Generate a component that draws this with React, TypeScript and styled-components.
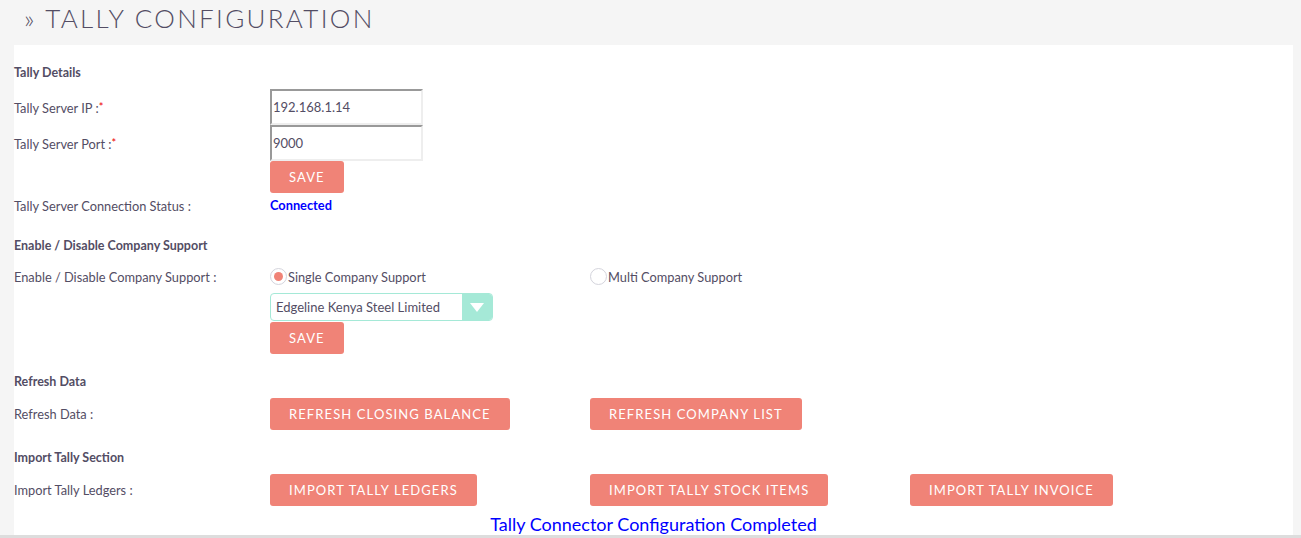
import React from 'react';
import styled, { createGlobalStyle } from 'styled-components';

const GlobalStyle = createGlobalStyle`
  html, body {
    margin: 0;
    padding: 0;
    background: #f5f5f5;
  }
  body {
    font-family: Lato, "Open Sans", sans-serif;
    color: #534d64;
  }
`;

const Page = styled.div`
  width: 1301px;
  height: 538px;
  overflow: hidden;
  background: #f5f5f5;
`;

const Title = styled.h1`
  margin: 0 0 9px;
  padding-left: 24px;
  height: 36px;
  line-height: 36px;
  font-size: 26px;
  font-weight: 300;
  letter-spacing: 2.3px;
  color: #534d64;
`;

const Panel = styled.div`
  margin: 0 8px 0 14px;
  background: #fff;
  padding: 18px 0 1px;
`;

const SectionTitle = styled.div<{ $top?: number }>`
  margin-top: ${p => p.$top ?? 0}px;
  height: 20px;
  line-height: 20px;
  font-size: 12.5px;
  font-weight: 700;
`;

const Row = styled.div<{ $top?: number; $h?: number }>`
  display: grid;
  grid-template-columns: 256px 320px 320px 1fr;
  align-items: center;
  margin-top: ${p => p.$top ?? 0}px;
  height: ${p => p.$h ?? 20}px;
  font-size: 12.8px;
`;

const Label = styled.div`
  line-height: 20px;
`;

const Req = styled.span`
  color: #e00;
  font-size: 11px;
  vertical-align: 2px;
`;

const TextInput = styled.input`
  box-sizing: border-box;
  width: 153px;
  height: 36px;
  margin: 0;
  padding: 0 1px;
  border: 2px solid;
  border-color: #999 #eee #eee #999;
  font-family: Lato, sans-serif;
  font-size: 13px;
  color: #534d64;
  outline: none;
  background: #fff;
`;

const Button = styled.button`
  height: 32px;
  padding: 0 19px;
  border: none;
  border-radius: 3px;
  background: #f08377;
  color: #fff;
  font-family: Lato, sans-serif;
  font-size: 13px;
  letter-spacing: 1.1px;
  text-transform: uppercase;
  cursor: pointer;
  justify-self: start;
`;

const Status = styled.div`
  font-weight: 700;
  color: #0000ff;
  margin-top: -3px;
`;

const RadioLabel = styled.label`
  display: flex;
  align-items: center;
  cursor: pointer;
  margin-top: -1px;
`;

const RadioCircle = styled.span<{ $checked?: boolean }>`
  box-sizing: border-box;
  width: 17px;
  height: 17px;
  margin-right: 1px;
  border-radius: 50%;
  border: 1px solid #d4d4dc;
  background: #fff;
  display: flex;
  align-items: center;
  justify-content: center;
  &::after {
    content: '';
    width: 9px;
    height: 9px;
    border-radius: 50%;
    background: ${p => (p.$checked ? '#f08377' : 'transparent')};
  }
`;

const Select = styled.div`
  box-sizing: border-box;
  width: 223px;
  height: 28px;
  border: 1px solid #a5e9d7;
  border-radius: 4px;
  display: flex;
  align-items: center;
  overflow: hidden;
  font-size: 13px;
`;

const SelectText = styled.span`
  flex: 1;
  padding-left: 5px;
`;

const SelectArrow = styled.span`
  width: 30px;
  height: 100%;
  background: #a5e9d7;
  display: flex;
  align-items: center;
  justify-content: center;
`;

const Done = styled.div`
  margin-top: 8px;
  height: 20px;
  line-height: 20px;
  text-align: center;
  font-size: 18px;
  color: #0000ff;
`;

const Footer = styled.div`
  height: 3px;
  background: #dddddd;
`;

export default function App() {
  return (
    <Page>
      <GlobalStyle />
      <Title>» TALLY CONFIGURATION</Title>
      <Panel>
        <SectionTitle>Tally Details</SectionTitle>
        <Row $top={6} $h={36}>
          <Label>
            Tally Server IP :<Req>*</Req>
          </Label>
          <TextInput defaultValue="192.168.1.14" />
        </Row>
        <Row $h={36}>
          <Label>
            Tally Server Port :<Req>*</Req>
          </Label>
          <TextInput defaultValue="9000" />
        </Row>
        <Row $h={32}>
          <span />
          <Button>Save</Button>
        </Row>
        <Row $top={3}>
          <Label>Tally Server Connection Status :</Label>
          <Status>Connected</Status>
        </Row>

        <SectionTitle $top={20}>Enable / Disable Company Support</SectionTitle>
        <Row $top={11}>
          <Label>Enable / Disable Company Support :</Label>
          <RadioLabel>
            <RadioCircle $checked />
            Single Company Support
          </RadioLabel>
          <RadioLabel>
            <RadioCircle />
            Multi Company Support
          </RadioLabel>
        </Row>
        <Row $top={6} $h={28}>
          <span />
          <Select>
            <SelectText>Edgeline Kenya Steel Limited</SelectText>
            <SelectArrow>
              <svg width="14" height="9" viewBox="0 0 14 9">
                <path d="M0 0 L14 0 L7 9 Z" fill="#fff" />
              </svg>
            </SelectArrow>
          </Select>
        </Row>
        <Row $top={1} $h={32}>
          <span />
          <Button>Save</Button>
        </Row>

        <SectionTitle $top={18}>Refresh Data</SectionTitle>
        <Row $top={6} $h={32}>
          <Label>Refresh Data :</Label>
          <Button>Refresh Closing Balance</Button>
          <Button>Refresh Company List</Button>
        </Row>

        <SectionTitle $top={18}>Import Tally Section</SectionTitle>
        <Row $top={6} $h={32}>
          <Label>Import Tally Ledgers :</Label>
          <Button>Import Tally Ledgers</Button>
          <Button>Import Tally Stock Items</Button>
          <Button>Import Tally Invoice</Button>
        </Row>
        <Done>Tally Connector Configuration Completed</Done>
      </Panel>
      <Footer />
    </Page>
  );
}
